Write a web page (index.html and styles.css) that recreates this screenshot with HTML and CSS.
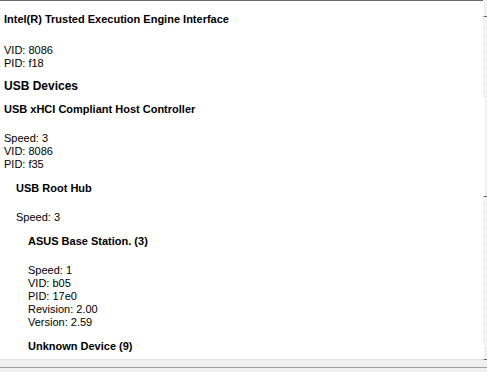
FILE: index.html
```html
<html>
	<head>
		<link rel="stylesheet" href="styles.css">
	</head>
	<body>

		<div class="ventana">

			<div class="panel">
				<div class="contenido">

					<div class="titulo">Intel(R) Trusted Execution Engine Interface</div>
					<div class="datos datosPrimero">
						VID: 8086<br>
						PID: f18
					</div>

					<div class="grupo">USB Devices</div>

					<div class="titulo tituloGrupo">USB xHCI Compliant Host Controller</div>
					<div class="datos">
						Speed: 3<br>
						VID: 8086<br>
						PID: f35
					</div>

					<div class="nivel2">
						<div class="titulo">USB Root Hub</div>
						<div class="datos">
							Speed: 3
						</div>

						<div class="nivel2">
							<div class="titulo">ASUS Base Station. (3)</div>
							<div class="datos">
								Speed: 1<br>
								VID: b05<br>
								PID: 17e0<br>
								Revision: 2.00<br>
								Version: 2.59
							</div>

							<div class="titulo">Unknown Device (9)</div>
						</div>
					</div>

				</div>

				<div class="scroll">
					<div class="botonScroll"><span class="flecha flechaArriba"></span></div>
					<div class="pista"></div>
					<div class="pulgar"></div>
					<div class="pista pistaLarga"></div>
					<div class="botonScroll"><span class="flecha flechaAbajo"></span></div>
				</div>
			</div>

			<div class="barraAbajo"></div>

		</div>

	</body>
</html>
```

FILE: styles.css
```css
			body {
				margin: 0;
				overflow: hidden;
				background-color: #f0f0f0;
				font-family: Tahoma, "Liberation Sans", Arial, sans-serif;
				font-size: 11px;
				color: #000;
			}
			.ventana {
				width: 500px;
				height: 372px;
				display: flex;
				flex-direction: column;
			}
			.panel {
				display: flex;
				flex-direction: row;
				height: 360px;
			}
			.contenido {
				width: 483px;
				background-color: #fff;
				border-top: 1px solid #696969;
				border-bottom: 1px solid #e3e3e3;
				box-sizing: border-box;
				overflow: hidden;
				padding-left: 4px;
				padding-top: 1px;
			}
			.titulo {
				font-weight: bold;
				line-height: 13px;
				margin-top: 11px;
				margin-bottom: 16px;
			}
			.datos {
				line-height: 13px;
			}
			.datosPrimero {
				padding-top: 2px;
			}
			.grupo {
				font-weight: bold;
				font-size: 12px;
				line-height: 15px;
				margin-top: 9px;
			}
			.tituloGrupo {
				margin-top: 9px;
			}
			.nivel2 {
				padding-left: 12px;
			}

			.scroll {
				width: 17px;
				display: flex;
				flex-direction: column;
				padding-top: 2px;
				box-sizing: border-box;
			}
			.botonScroll {
				height: 15px;
				background-color: #f0f0f0;
				border: 1px solid;
				border-color: #fff #696969 #696969 #fff;
				box-sizing: border-box;
				position: relative;
			}
			.flecha {
				position: absolute;
				left: 6px;
				width: 0;
				height: 0;
				border-left: 3px solid transparent;
				border-right: 3px solid transparent;
			}
			.flechaArriba {
				top: 5px;
				border-bottom: 3px solid #000;
			}
			.flechaAbajo {
				top: 5px;
				border-top: 3px solid #000;
			}
			.pista {
				height: 80px;
				background-color: #f4f4f4;
				background-image: repeating-conic-gradient(#fff 0 25%, #e8e8e8 0 50%);
				background-size: 2px 2px;
			}
			.pistaLarga {
				flex: 1;
			}
			.pulgar {
				height: 100px;
				background-color: #f0f0f0;
				border: 1px solid;
				border-color: #f0f0f0 #696969 #696969 #fff;
				box-shadow: inset 1px 1px #fff;
				box-sizing: border-box;
			}
			.barraAbajo {
				height: 7px;
				background-color: #f0f0f0;
				border-bottom: 1px solid #a0a0a0;
			}
```
